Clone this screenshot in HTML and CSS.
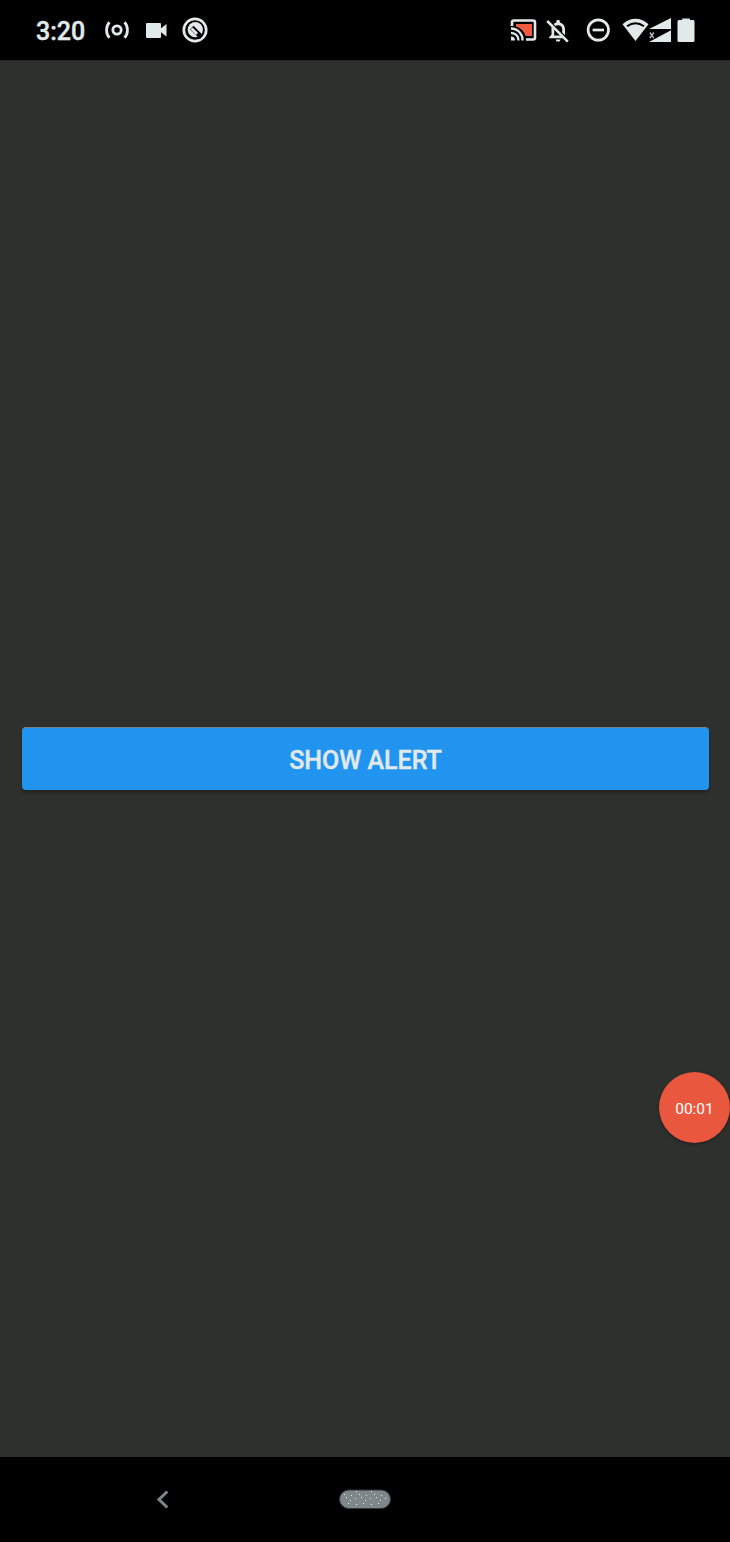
FILE: index.html
```html
<!DOCTYPE html>
<html lang="en">
<head>
<meta charset="utf-8">
<title>Show Alert</title>
<link rel="stylesheet" href="styles.css">
</head>
<body>
<div class="screen">
  <header class="status">
    <div class="status-left">
      <span class="clock">3:20</span>
      <svg class="hotspot" width="24" height="24" viewBox="0 0 24 24" fill="none" stroke="#e2e9ea" stroke-width="2.8"><circle cx="12" cy="12" r="4.2"/><path d="M4.500 4.200C.6 8 .6 16 4.500 19.800M19.500 4.200c3.900 3.800 3.900 11.800 0 15.600"/></svg>
      <svg class="video" width="22" height="24" viewBox="0 0 22 24" fill="#e2e9ea"><path d="M2 5h13q1 0 1 1v4.200L21.500 6v12.500l-5.500-4.200V19q0 1-1 1H2q-1 0-1-1V6q0-1 1-1z"/></svg>
      <svg class="blocked" width="26" height="26" viewBox="0 0 26 26" fill="none"><circle cx="13" cy="13" r="11.200" stroke="#e2e9ea" stroke-width="2.700"/><circle cx="13.300" cy="12.700" r="7.600" fill="#e2e9ea"/><path d="M8 12.500l3.500-3.800L21 18.200l-3 3.800z" fill="#000"/><path d="M9.500 11.500l5.500 5.500" stroke="#e2e9ea" stroke-width="2.800"/></svg>
    </div>
    <div class="status-right">
      <svg class="cast" width="27" height="24" viewBox="0 0 27 24" fill="none"><path d="M6 6h16v12h-6.500Q13.500 11 6 8.500z" fill="#f05a40"/><path d="M2 8V4.500Q2 2.500 4 2.500h19q2 0 2 2v15q0 2-2 2h-7" stroke="#e2e9ea" stroke-width="2.600"/><path d="M1 10.500a11.500 11.500 0 0 1 11.500 12M1 14.800a7.500 7.500 0 0 1 7.500 7.700" stroke="#e2e9ea" stroke-width="2.300"/><path d="M1 18.500a4 4 0 0 1 4 4H1z" fill="#e2e9ea"/></svg>
      <svg class="bell" width="24" height="24" viewBox="0 0 24 24"><path d="M7.600 5.100Q9 4 10.300 3.600V2.500a1.800 1.800 0 0 1 3.600 0v1.100Q19 5 19 10.500v5.700L16.200 13.400V10.500Q16.200 6.200 12.100 6.200Q10.500 6.200 9.500 7zM5.600 7.900L8.200 10.500V16.600H14.400L17.100 19.300H3.200v-1.200l2.300-2.300V11Q5.300 9.500 5.600 7.900zM9.700 20.400h4.800a2.400 2.400 0 0 1-4.800 0z" fill="#e2e9ea"/><path d="M1.200 2l20.600 20.600" stroke="#e2e9ea" stroke-width="2.500"/></svg>
      <svg class="dnd" width="24" height="24" viewBox="0 0 24 24" fill="none" stroke="#e2e9ea" stroke-width="2.700"><circle cx="12.300" cy="12" r="10.200"/><path d="M6.600 12h11.400"/></svg>
      <svg class="wifi" width="27" height="24" viewBox="0 0 27 24"><path d="M.5 6.200Q13.500-4.700 26.500 6.200L13.500 23z" fill="#e2e9ea"/><path d="M5 8.300Q13.500 2.100 22 8.300" fill="none" stroke="#000" stroke-width="2"/></svg>
      <svg class="signal" width="22" height="24" viewBox="0 0 22 24" fill="#e2e9ea"><path d="M22 0v11H0zM22 12.300V24H0z"/><path d="M0 13h8v5l-3.500 2.500H0z" fill="#000"/><path d="M.8 14.500l4 5.500m0-5.500L.8 20" stroke="#b7bfc0" stroke-width="1.300"/></svg>
      <svg class="battery" width="18" height="24" viewBox="0 0 18 24" fill="#e2e9ea"><path d="M5.200 2V.5h7.600V2H16q1.500 0 1.500 1.500v19q0 1.500-1.500 1.500H2Q.5 24 .5 22.500v-19Q.5 2 2 2z"/></svg>
    </div>
  </header>
  <main class="content">
    <button class="alert-button">SHOW ALERT</button>
    <div class="timer">00:01</div>
  </main>
  <nav class="navbar">
    <svg class="back" width="14" height="20" viewBox="0 0 14 20" fill="none" stroke="#7e8789" stroke-width="3"><path d="M12.300 1.500L4 9.500l8.300 8"/></svg>
    <svg class="home" width="52" height="21" viewBox="0 0 52 21"><defs><pattern id="speckle" width="15" height="13" patternUnits="userSpaceOnUse"><path d="M2 2h1v1h-1zM9 1h1v1h-1zM5 5h1v1h-1zM12 6h1v1h-1zM1 9h1v1h-1zM7 8h1v1h-1zM11 11h1v1h-1z" fill="#e2e9ea"/></pattern></defs><rect x=".5" y="1" width="51" height="18.500" rx="9.250" fill="#7e8789" stroke="#303638"/><rect x="3" y="2" width="46" height="16" rx="8" fill="url(#speckle)"/></svg>
  </nav>
</div>
</body>
</html>
```

FILE: styles.css
```css
* { box-sizing: border-box; }
body { margin: 0; background: #000; font-family: Roboto, sans-serif; }
svg { display: block; flex: none; }
.screen { display: flex; flex-direction: column; width: 730px; height: 1542px; position: relative; }
.status { height: 60px; flex: none; display: flex; justify-content: space-between; background: #000; padding: 0 35px; }
.status-left, .status-right { display: flex; align-items: center; }
.clock { width: 70px; font-size: 25px; font-weight: 500; line-height: 30px; color: #e2e9ea; padding: 4px 0 0 1px; -webkit-text-stroke: .4px #e2e9ea; }
.video { margin-left: 16px; margin-right: 15px; }
.cast { margin-right: 9px; }
.bell { margin-right: 16px; margin-top: 1px; }
.dnd { margin-right: 12px; }
.signal { margin-right: 6px; }
.content { flex: 1; display: flex; flex-direction: column; background: #2e302e; border-top: 1px solid #222422; padding: 666px 21px 0 22px; }
.alert-button { height: 63px; flex: none; padding: 3px 0 0; border: 0; border-top: 1px solid #71838d; border-radius: 4px; background: #2094ef; box-shadow: 0 3px 3px rgba(0,0,0,.22); color: #e2e9ea; font: 500 25px/30px Roboto, sans-serif; -webkit-text-stroke: .4px #e2e9ea; }
.timer { flex: none; width: 71px; height: 71px; margin: 282px -21px 0 auto; border-radius: 50%; background: #ea573f; box-shadow: 0 1px 3px rgba(0,0,0,.4); color: #fff; font-size: 15.500px; line-height: 74px; text-align: center; }
.navbar { height: 85px; flex: none; display: flex; align-items: center; background: #000; padding-left: 155px; }
.home { margin-left: 170px; }
```
